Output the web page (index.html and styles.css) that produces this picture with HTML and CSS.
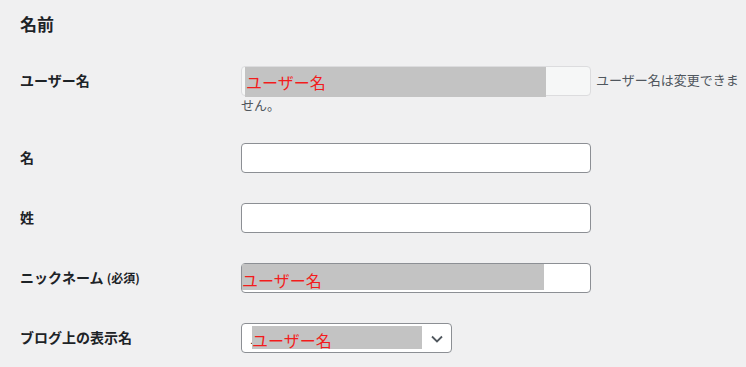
FILE: index.html
```html
<!DOCTYPE html>
<html lang="ja">
<head>
<meta charset="UTF-8">
<meta name="viewport" content="width=device-width, initial-scale=1.0">
<title>プロフィール</title>
<link rel="stylesheet" href="styles.css">
</head>
<body>

<div class="wrap">
  <h2 class="section-title">名前</h2>
  <table class="form-table">
    <tr>
      <th><label for="user_login">ユーザー名</label></th>
      <td>
        <span class="field"><input type="text" id="user_login" class="regular-text" disabled><span class="redact redact-login">ユーザー名</span></span>
        <span class="description">ユーザー名は変更できません。</span>
      </td>
    </tr>
    <tr>
      <th><label for="first_name">名</label></th>
      <td><span class="field"><input type="text" id="first_name" class="regular-text"></span></td>
    </tr>
    <tr>
      <th><label for="last_name">姓</label></th>
      <td><span class="field"><input type="text" id="last_name" class="regular-text"></span></td>
    </tr>
    <tr>
      <th><label for="nickname">ニックネーム <span class="required">(必須)</span></label></th>
      <td>
        <span class="field"><input type="text" id="nickname" class="regular-text"><span class="redact redact-nick">ユーザー名</span></span>
      </td>
    </tr>
    <tr>
      <th><label for="display_name">ブログ上の表示名</label></th>
      <td>
        <span class="field">
          <select id="display_name" class="display-select">
            <option>ユーザー名</option>
          </select>
          <svg class="chevron" width="12" height="8" viewBox="0 0 12 8"><polyline points="1,1.5 6,6.5 11,1.5" fill="none" stroke="#50575e" stroke-width="1.8"/></svg>
          <span class="redact redact-display">ユーザー名</span>
        </span>
      </td>
    </tr>
  </table>
</div>

</body>
</html>
```

FILE: styles.css
```css
body {
  margin: 0;
  background: #f0f0f1;
  color: #1d2327;
  font-family: "Noto Sans CJK JP", "Noto Sans", sans-serif;
  font-size: 13px;
}
.wrap {
  padding: 0 0 0 20px;
}
.section-title {
  font-size: 17px;
  font-weight: 600;
  line-height: 22px;
  margin: 13px 0 16px;
}
.form-table {
  border-collapse: collapse;
  width: 100%;
}
.form-table th {
  width: 201px;
  padding: 20px 10px 20px 0;
  text-align: left;
  vertical-align: top;
  font-size: 14px;
  font-weight: 600;
  line-height: 18px;
}
.form-table td {
  padding: 15px 0 15px 10px;
  vertical-align: top;
  line-height: 17px;
}
.required {
  font-size: 12px;
}
.field {
  position: relative;
  display: inline-block;
  vertical-align: middle;
}
.regular-text,
.display-select {
  display: block;
  box-sizing: border-box;
  height: 30px;
  margin: 0;
  border: 1px solid #8c8f94;
  border-radius: 4px;
  background: #fff;
  font-family: inherit;
  font-size: 14px;
  color: #2c3338;
}
.regular-text {
  width: 350px;
  padding: 0 8px;
}
.regular-text:disabled {
  background: #f6f7f7;
  border-color: #dcdcde;
}
.display-select {
  width: 211px;
  padding: 0 24px 0 8px;
  appearance: none;
  -webkit-appearance: none;
}
.chevron {
  position: absolute;
  left: 190px;
  top: 12px;
}
.description {
  margin-left: 2px;
  color: #50575e;
}
.redact {
  position: absolute;
  background: #c3c3c3;
  color: #f21c1c;
  font-size: 16px;
  white-space: nowrap;
  overflow: visible;
}
.redact-login {
  left: 4px;
  top: 1px;
  width: 301px;
  height: 30px;
  line-height: 31px;
  padding-left: 1px;
  box-sizing: border-box;
}
.redact-nick {
  left: 1px;
  top: 1px;
  width: 302px;
  height: 26px;
  line-height: 32px;
}
.redact-display {
  left: 11px;
  top: 3px;
  width: 170px;
  height: 23px;
  line-height: 28px;
}
```
